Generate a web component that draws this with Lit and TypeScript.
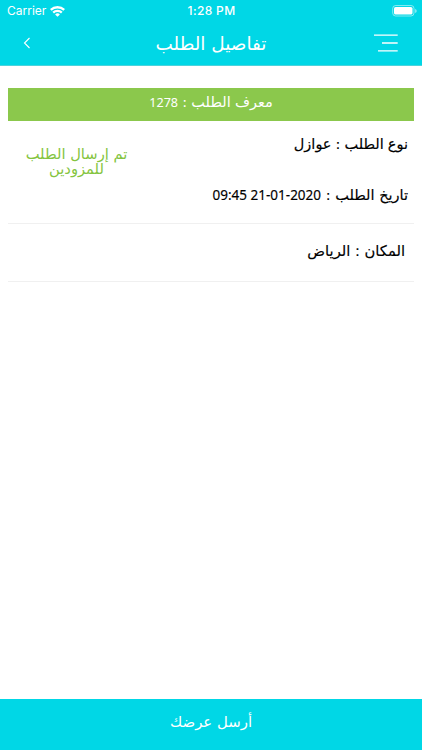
import { LitElement, html, css } from "lit";
import { customElement } from "lit/decorators.js";

@customElement("app-root")
export class AppRoot extends LitElement {
  static styles = css`
    :host {
      display: flex;
      flex-direction: column;
      height: 750px;
      background: #fff;
      color: #000;
      font-family: "DejaVu Sans", "Noto Sans", sans-serif;
      overflow: hidden;
    }
    * { box-sizing: border-box; }
    .top { height: 66px; flex: none; background: #00d7e6; color: #fff; border-bottom: 1px solid #4cd3dc; }
    .status {
      display: grid;
      grid-template-columns: 1fr auto 1fr;
      align-items: center;
      height: 22px;
      padding: 0 4px 0 7px;
      font: 12px/22px Inter, sans-serif;
    }
    .carrier { display: flex; align-items: center; gap: 4px; }
    .time { font-weight: 500; letter-spacing: 0.35px; margin-right: 2px; }
    .battery { justify-self: end; }
    .nav {
      display: grid;
      grid-template-columns: 48px 1fr 48px;
      align-items: center;
      height: 43px;
    }
    .back { margin-left: 22px; margin-bottom: 2px; }
    .menu { margin-bottom: 1px; }
    svg { display: block; }
    .title { text-align: center; font-size: 18.4px; line-height: 43px; white-space: nowrap; }
    .content { flex: 1; padding: 22px 8px 0; }
    .num { font-family: "Noto Sans", sans-serif; font-size: 13.5px; word-spacing: 0; }
    .banner {
      height: 33px;
      background: #8bc84c;
      color: #fff;
      text-align: center;
      font-size: 14.5px;
      word-spacing: -0.4px;
      line-height: 29px;
      white-space: nowrap;
    }
    .banner .num { font-size: 12.6px; }
    .info { display: flex; height: 103px; border-bottom: 1px solid #f0f0f0; }
    .state {
      width: 137px;
      padding-top: 25px;
      text-align: center;
      font-size: 14.7px;
      line-height: 15px;
      color: #84c440;
    }
    .lines { flex: 1; padding-right: 6px; }
    .line { font-size: 14.5px; word-spacing: -0.6px; white-space: nowrap; height: 51px; line-height: 46px; -webkit-text-stroke: 0.15px #000; }
    .line.date { word-spacing: 0; }
    .place { height: 58px; border-bottom: 1px solid #f0f0f0; padding-right: 9px; line-height: 54px; font-size: 14.7px; -webkit-text-stroke: 0.15px #000; }
    .send {
      flex: none;
      height: 51px;
      background: #00d7e6;
      color: #fff;
      text-align: center;
      font-size: 14.9px;
      line-height: 46px;
    }
  `;

  render() {
    return html`
      <header class="top">
        <div class="status">
          <div class="carrier"><span>Carrier</span>
            <svg width="15" height="11" viewBox="0 0 15 11" fill="none" stroke="#fff" stroke-width="2.3">
              <path d="M.8 3.9a9.8 9.8 0 0 1 13.4 0M3.2 6.6a6.2 6.2 0 0 1 8.6 0" />
              <path d="M7.5 10.7 5.1 8.4a3.4 3.4 0 0 1 4.8 0Z" fill="#fff" stroke="none" />
            </svg>
          </div>
          <span class="time">1:28 PM</span>
          <svg class="battery" width="26" height="12" viewBox="0 0 26 12">
            <rect x=".7" y=".5" width="21.3" height="10.5" rx="3" fill="none" stroke="#fff" stroke-opacity=".5" />
            <rect x="2" y="2" width="18.5" height="7.5" rx="1.6" fill="#fff" />
            <path d="M23.2 4v4q1.5-.6 1.5-2t-1.5-2" fill="#fff" fill-opacity=".6" />
          </svg>
        </div>
        <nav class="nav">
          <svg class="back" width="10" height="12" viewBox="0 0 10 12" fill="none" stroke="#fff" stroke-width="1.1"><path d="M7.5 1 2.5 6l5 5" /></svg>
          <div class="title" dir="rtl">تفاصيل الطلب</div>
          <svg class="menu" width="26" height="18" viewBox="0 0 26 18" stroke="#fff" stroke-width="1.3"><path d="M0 1.2h23.7M8 9h15.7M4 16.8h19.7" /></svg>
        </nav>
      </header>
      <main class="content">
        <div class="banner" dir="rtl">معرف الطلب : <bdi class="num">1278</bdi></div>
        <section class="info">
          <div class="state" dir="rtl">تم إرسال الطلب<br />للمزودين</div>
          <div class="lines" dir="rtl">
            <div class="line">نوع الطلب : عوازل</div>
            <div class="line date">تاريخ الطلب : <bdi class="num" dir="ltr">09:45 21-01-2020</bdi></div>
          </div>
        </section>
        <div class="place" dir="rtl">المكان : الرياض</div>
      </main>
      <footer class="send" dir="rtl">أرسل عرضك</footer>
    `;
  }
}
